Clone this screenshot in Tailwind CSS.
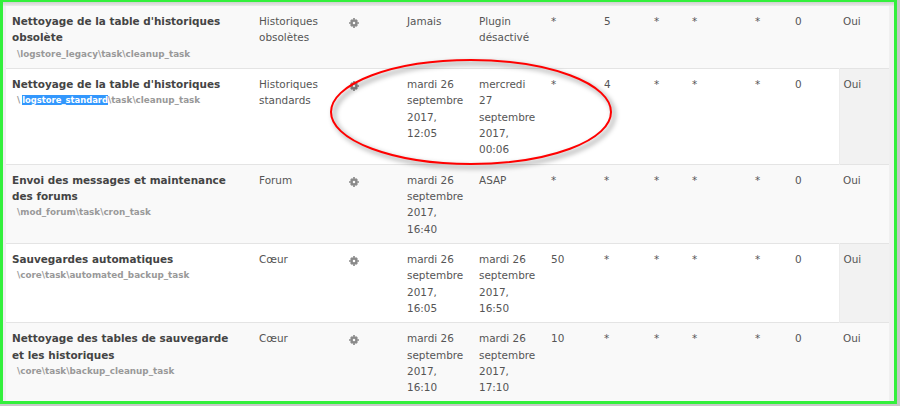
<!DOCTYPE html>
<html lang="fr">
<head>
    <meta charset="UTF-8">
    <script src="https://cdn.jsdelivr.net/npm/@tailwindcss/browser@4"></script>
    <title>Tâches planifiées</title>
</head>
<body class="w-[900px] h-[406px] overflow-hidden bg-[#c8c8c8] font-['DejaVu_Sans',sans-serif] text-[10.45px] leading-[16.33px] text-[#555]">
    <div class="relative w-[897px] h-[404px] border-x-[3px] border-t-2 border-b-[3px] border-[#33f03c] bg-[#f0f0f0] overflow-hidden">
        <div class="h-1 bg-gradient-to-b from-[#d0d0d0] to-[#ececec]"></div>
        <table class="w-[883px] table-fixed border-collapse ml-[3px]">
            <colgroup>
                <col class="w-[245px]"><col class="w-[90px]"><col class="w-[58px]"><col class="w-[72px]"><col class="w-[72px]"><col class="w-[53px]"><col class="w-[50px]"><col class="w-[38px]"><col class="w-[63px]"><col class="w-[40px]"><col class="w-[52px]"><col class="w-[50px]">
            </colgroup>
            <tbody>
                <!-- ligne 1 -->
                <tr class="bg-[#f9f9f9] border-b border-[#e4e4e4] align-top">
                    <td class="pl-[6px] pr-[8px] pt-[7px] pb-[6px]"><div class="font-bold text-[#444]">Nettoyage de la table d'historiques obsolète</div><div class="pl-[5px] text-[8.8px] font-bold text-[#999]">\logstore_legacy\task\cleanup_task</div></td>
                    <td class="px-[8px] pt-[7px] pb-[6px]">Historiques obsolètes</td>
                    <td class="px-[8px] pt-[7px] pb-[6px]"><svg class="w-[10px] h-[10px] mt-[5px]" viewBox="0 0 12 12"><circle cx="6" cy="6" r="3" fill="none" stroke="#8a8a8a" stroke-width="3"/><path d="M5 0h2v2H5zM5 10h2v2H5zM0 5h2v2H0zM10 5h2v2h-2zM1.5 3 3 1.500 4 2.500 2.500 4zM8 2.500 9 1.500 10.500 3 9.500 4zM1.500 9 2.500 8 4 9.500 3 10.500zM8 9.500 9.500 8 10.500 9 9 10.500z" fill="#8a8a8a"/></svg></td>
                    <td class="px-[8px] pt-[7px] pb-[6px]">Jamais</td>
                    <td class="px-[8px] pt-[7px] pb-[6px]">Plugin désactivé</td>
                    <td class="px-[8px] pt-[7px] pb-[6px]">*</td><td class="px-[8px] pt-[7px] pb-[6px]">5</td><td class="px-[8px] pt-[7px] pb-[6px]">*</td><td class="px-[8px] pt-[7px] pb-[6px]">*</td><td class="px-[8px] pt-[7px] pb-[6px]">*</td><td class="px-[8px] pt-[7px] pb-[6px]">0</td>
                    <td class="px-[4px] pt-[7px] pb-[6px]">Oui</td>
                </tr>
                <!-- ligne 2 -->
                <tr class="bg-white border-b border-[#e4e4e4] align-top">
                    <td class="pl-[6px] pr-[8px] pt-[7px] pb-[6px]"><div class="font-bold text-[#444]">Nettoyage de la table d'historiques</div><div class="pl-[5px] text-[8.8px] font-bold text-[#999]">\<span class="ml-[2px] text-[8.4px] bg-[#3297fd] text-white">logstore_standard</span>\task\cleanup_task</div></td>
                    <td class="px-[8px] pt-[7px] pb-[6px]">Historiques standards</td>
                    <td class="px-[8px] pt-[7px] pb-[6px]"><svg class="w-[10px] h-[10px] mt-[5px]" viewBox="0 0 12 12"><circle cx="6" cy="6" r="3" fill="none" stroke="#8a8a8a" stroke-width="3"/><path d="M5 0h2v2H5zM5 10h2v2H5zM0 5h2v2H0zM10 5h2v2h-2zM1.5 3 3 1.500 4 2.500 2.500 4zM8 2.500 9 1.500 10.500 3 9.500 4zM1.500 9 2.500 8 4 9.500 3 10.500zM8 9.500 9.500 8 10.500 9 9 10.500z" fill="#8a8a8a"/></svg></td>
                    <td class="px-[8px] pt-[7px] pb-[6px]">mardi 26 septembre 2017, 12:05</td>
                    <td class="px-[8px] pt-[7px] pb-[6px]">mercredi 27 septembre 2017, 00:06</td>
                    <td class="px-[8px] pt-[7px] pb-[6px]">*</td><td class="px-[8px] pt-[7px] pb-[6px]">4</td><td class="px-[8px] pt-[7px] pb-[6px]">*</td><td class="px-[8px] pt-[7px] pb-[6px]">*</td><td class="px-[8px] pt-[7px] pb-[6px]">*</td><td class="px-[8px] pt-[7px] pb-[6px]">0</td>
                    <td class="px-[4px] pt-[7px] pb-[6px] bg-[#f2f2f2] border-l border-[#ececec]">Oui</td>
                </tr>
                <!-- ligne 3 -->
                <tr class="bg-[#f9f9f9] border-b border-[#e4e4e4] align-top">
                    <td class="pl-[6px] pr-[8px] pt-[7px] pb-[6px]"><div class="font-bold text-[#444]">Envoi des messages et maintenance des forums</div><div class="pl-[5px] text-[8.8px] font-bold text-[#999]">\mod_forum\task\cron_task</div></td>
                    <td class="px-[8px] pt-[7px] pb-[6px]">Forum</td>
                    <td class="px-[8px] pt-[7px] pb-[6px]"><svg class="w-[10px] h-[10px] mt-[5px]" viewBox="0 0 12 12"><circle cx="6" cy="6" r="3" fill="none" stroke="#8a8a8a" stroke-width="3"/><path d="M5 0h2v2H5zM5 10h2v2H5zM0 5h2v2H0zM10 5h2v2h-2zM1.5 3 3 1.500 4 2.500 2.500 4zM8 2.500 9 1.500 10.500 3 9.500 4zM1.500 9 2.500 8 4 9.500 3 10.500zM8 9.500 9.500 8 10.500 9 9 10.500z" fill="#8a8a8a"/></svg></td>
                    <td class="px-[8px] pt-[7px] pb-[6px]">mardi 26 septembre 2017, 16:40</td>
                    <td class="px-[8px] pt-[7px] pb-[6px]">ASAP</td>
                    <td class="px-[8px] pt-[7px] pb-[6px]">*</td><td class="px-[8px] pt-[7px] pb-[6px]">*</td><td class="px-[8px] pt-[7px] pb-[6px]">*</td><td class="px-[8px] pt-[7px] pb-[6px]">*</td><td class="px-[8px] pt-[7px] pb-[6px]">*</td><td class="px-[8px] pt-[7px] pb-[6px]">0</td>
                    <td class="px-[4px] pt-[7px] pb-[6px]">Oui</td>
                </tr>
                <!-- ligne 4 -->
                <tr class="bg-white border-b border-[#e4e4e4] align-top">
                    <td class="pl-[6px] pr-[8px] pt-[7px] pb-[6px]"><div class="font-bold text-[#444]">Sauvegardes automatiques</div><div class="pl-[5px] text-[8.8px] font-bold text-[#999]">\core\task\automated_backup_task</div></td>
                    <td class="px-[8px] pt-[7px] pb-[6px]">Cœur</td>
                    <td class="px-[8px] pt-[7px] pb-[6px]"><svg class="w-[10px] h-[10px] mt-[5px]" viewBox="0 0 12 12"><circle cx="6" cy="6" r="3" fill="none" stroke="#8a8a8a" stroke-width="3"/><path d="M5 0h2v2H5zM5 10h2v2H5zM0 5h2v2H0zM10 5h2v2h-2zM1.5 3 3 1.500 4 2.500 2.500 4zM8 2.500 9 1.500 10.500 3 9.500 4zM1.500 9 2.500 8 4 9.500 3 10.500zM8 9.500 9.500 8 10.500 9 9 10.500z" fill="#8a8a8a"/></svg></td>
                    <td class="px-[8px] pt-[7px] pb-[6px]">mardi 26 septembre 2017, 16:05</td>
                    <td class="px-[8px] pt-[7px] pb-[6px]">mardi 26 septembre 2017, 16:50</td>
                    <td class="px-[8px] pt-[7px] pb-[6px]">50</td><td class="px-[8px] pt-[7px] pb-[6px]">*</td><td class="px-[8px] pt-[7px] pb-[6px]">*</td><td class="px-[8px] pt-[7px] pb-[6px]">*</td><td class="px-[8px] pt-[7px] pb-[6px]">*</td><td class="px-[8px] pt-[7px] pb-[6px]">0</td>
                    <td class="px-[4px] pt-[7px] pb-[6px] bg-[#f2f2f2] border-l border-[#ececec]">Oui</td>
                </tr>
                <!-- ligne 5 -->
                <tr class="bg-[#f9f9f9] align-top">
                    <td class="pl-[6px] pr-[8px] pt-[7px] pb-[6px]"><div class="font-bold text-[#444]">Nettoyage des tables de sauvegarde et les historiques</div><div class="pl-[5px] text-[8.8px] font-bold text-[#999]">\core\task\backup_cleanup_task</div></td>
                    <td class="px-[8px] pt-[7px] pb-[6px]">Cœur</td>
                    <td class="px-[8px] pt-[7px] pb-[6px]"><svg class="w-[10px] h-[10px] mt-[5px]" viewBox="0 0 12 12"><circle cx="6" cy="6" r="3" fill="none" stroke="#8a8a8a" stroke-width="3"/><path d="M5 0h2v2H5zM5 10h2v2H5zM0 5h2v2H0zM10 5h2v2h-2zM1.5 3 3 1.500 4 2.500 2.500 4zM8 2.500 9 1.500 10.500 3 9.500 4zM1.500 9 2.500 8 4 9.500 3 10.500zM8 9.500 9.500 8 10.500 9 9 10.500z" fill="#8a8a8a"/></svg></td>
                    <td class="px-[8px] pt-[7px] pb-[6px]">mardi 26 septembre 2017, 16:10</td>
                    <td class="px-[8px] pt-[7px] pb-[6px]">mardi 26 septembre 2017, 17:10</td>
                    <td class="px-[8px] pt-[7px] pb-[6px]">10</td><td class="px-[8px] pt-[7px] pb-[6px]">*</td><td class="px-[8px] pt-[7px] pb-[6px]">*</td><td class="px-[8px] pt-[7px] pb-[6px]">*</td><td class="px-[8px] pt-[7px] pb-[6px]">*</td><td class="px-[8px] pt-[7px] pb-[6px]">0</td>
                    <td class="px-[4px] pt-[7px] pb-[6px]">Oui</td>
                </tr>
            </tbody>
        </table>
    </div>
    <!-- ellipse rouge par-dessus le tableau -->
    <svg class="absolute left-0 top-0 w-[900px] h-[406px] pointer-events-none" viewBox="0 0 900 406">
        <defs><filter id="ombre" x="-10%" y="-20%" width="120%" height="140%"><feGaussianBlur stdDeviation="2.5"/></filter></defs>
        <ellipse cx="474" cy="115" rx="140" ry="52" fill="none" stroke="#000" stroke-opacity="0.35" stroke-width="3" filter="url(#ombre)"/>
        <ellipse cx="471" cy="112" rx="140" ry="52" fill="none" stroke="#ff0000" stroke-width="2"/>
    </svg>
</body>
</html>
